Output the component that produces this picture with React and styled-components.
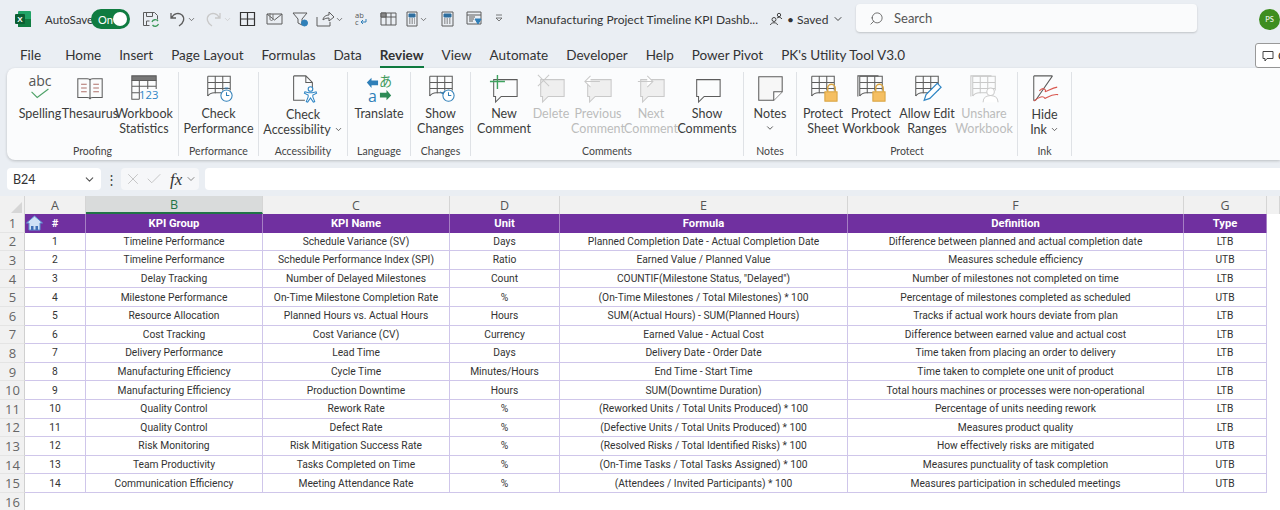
import styled, { createGlobalStyle } from 'styled-components';
import { ChevronDown, Search, X, Check } from 'lucide-react';

const GlobalStyle = createGlobalStyle`
  html, body { margin: 0; padding: 0; background: #fff; }
  body { font-family: Lato, 'Open Sans', 'Liberation Sans', sans-serif; }
`;

const GRAY = '#5c5c5c';
const FAINT = '#c9c9c9';

// ---- ribbon icons ----
const Ico = ({ children, size = 30 }) => (
  <svg width={size} height={size} viewBox="0 0 32 32" fill="none" strokeWidth="1.1" style={{ overflow: 'visible' }}>{children}</svg>
);

const GridLines = ({ c = GRAY, x = 0 }) => (
  <g stroke={c} transform={`translate(${x} 0)`}>
    <path d="M4 2.500h24v15M4 2.500v21M4 9h24M4 15.500h24M12 2.500v18M20 2.500v15" />
    <path d="M4 23.500c2-3 4-3.500 7-3.500h8" />
  </g>
);

const Clock = ({ c = '#2f7fb8', cx = 24, cy = 23 }) => (
  <g stroke={c} fill="#fff">
    <circle cx={cx} cy={cy} r="6" />
    <path d={`M${cx} ${cy - 3.5}v3.500h3`} fill="none" />
    <path d={`M${cx - 2} ${cy - 8}h4`} />
  </g>
);

const Lock = ({ x = 0 }) => (
  <g transform={`translate(${x} 0)`}>
    <path d="M21 19v-4a4 4 0 0 1 8 0v4" stroke="#d9a441" strokeWidth="1.6" fill="none" />
    <rect x="18" y="19" width="13" height="10" fill="#f5bf62" stroke="#d9a441" />
  </g>
);

const Bubble = ({ c = GRAY, fill = 'none' }) => (
  <path d="M5 6h25v18H13l-6 6v-6H5z" stroke={c} fill={fill} />
);

const icons = {
  spelling: (
    <Ico>
      <text x="16" y="13" textAnchor="middle" fontSize="15" fill="#555" fontFamily="Open Sans, sans-serif">abc</text>
      <path d="M7 19l6 6 12-9" stroke="#4da167" strokeWidth="1.2" />
    </Ico>
  ),
  thesaurus: (
    <Ico>
      <path d="M3 5h10c2 0 3 1 3 2 0-1 1-2 3-2h10v20H19c-2 0-3 1-3 2 0-1-1-2-3-2H3zM16 7v20" stroke={GRAY} />
      <path d="M6.500 11h6M6.500 15h6M6.500 19h6M19.500 11h6M19.500 15h6M19.500 19h6" stroke="#b0706a" />
    </Ico>
  ),
  stats: (
    <Ico>
      <path d="M3 2h26v5H3z" fill="#777" stroke={GRAY} />
      <path d="M3 7v20h8M29 7v9M3 13h26M3 20h8M11 7v20M20 7v9" stroke={GRAY} />
      <text x="21" y="27" textAnchor="middle" fontSize="12" fill="#2f86c5" fontFamily="Open Sans, sans-serif">123</text>
    </Ico>
  ),
  performance: <Ico><GridLines /><Clock /></Ico>,
  accessibility: (
    <Ico>
      <path d="M6 2h13l7 7v9M19 2v7h7M6 2v26h12" stroke={GRAY} />
      <g stroke="#2f86c5" fill="#fff">
        <circle cx="24" cy="16" r="2.500" />
        <path d="M18 19l4 1h4l4-1 .5 1.500-4 2v2l2 5-1.500.5-3-4.500-3 4.500-1.500-.5 2-5v-2l-4-2z" />
      </g>
    </Ico>
  ),
  translate: (
    <Ico>
      <path d="M3 9l5-5v3h7v5H8v3z" fill="#2f7fb8" />
      <text x="9" y="30" textAnchor="middle" fontSize="17" fill="#2f7fb8" fontFamily="Open Sans, sans-serif">a</text>
      <text x="23" y="13" textAnchor="middle" fontSize="14" fill="#3f9a5c" fontFamily="Noto Sans CJK JP, sans-serif">あ</text>
      <path d="M29 23l-5 5v-3h-7v-5h7v-3z" fill="#2e8b57" />
    </Ico>
  ),
  changes: (
    <Ico>
      <GridLines />
      <circle cx="24" cy="23" r="6" stroke="#2f7fb8" fill="#fff" />
      <path d="M24 19.500V23h3M15 19l3 2 2-3" stroke="#2f7fb8" />
    </Ico>
  ),
  newComment: (
    <Ico>
      <Bubble />
      <path d="M9 1v15M1 8h16" stroke="#3fa35f" strokeWidth="1.500" />
    </Ico>
  ),
  deleteComment: (
    <Ico>
      <Bubble c={FAINT} fill="#efefef" />
      <path d="M2 1l12 12M14 1L2 13" stroke={FAINT} />
    </Ico>
  ),
  prevComment: (
    <Ico>
      <Bubble c={FAINT} fill="#efefef" />
      <path d="M2 8h16M8 2L2 8l6 6" stroke={FAINT} fill="#fff" />
    </Ico>
  ),
  nextComment: (
    <Ico>
      <Bubble c={FAINT} fill="#efefef" />
      <path d="M2 8h16M12 2l6 6-6 6" stroke={FAINT} fill="#fff" />
    </Ico>
  ),
  showComments: <Ico><Bubble /></Ico>,
  notes: (
    <Ico>
      <path d="M4 3h25v16l-9 9H4z" stroke={GRAY} fill="#f7f7f7" />
      <path d="M29 19h-9v9" stroke={GRAY} fill="#fff" />
    </Ico>
  ),
  protectSheet: <Ico><GridLines /><Lock /></Ico>,
  protectWorkbook: (
    <Ico>
      <path d="M2 24V2h22" stroke={GRAY} />
      <GridLines />
      <Lock />
    </Ico>
  ),
  allowEdit: (
    <Ico>
      <GridLines />
      <path d="M27 10l4 4-12 12-6 2 2-6z" stroke="#2f86c5" fill="#fff" strokeWidth="1.3" />
    </Ico>
  ),
  unshare: (
    <Ico>
      <path d="M2 24V2h22" stroke={FAINT} />
      <GridLines c={FAINT} />
      <circle cx="23" cy="19" r="4" stroke={FAINT} fill="#fff" />
      <path d="M15 30c0-5 4-7 8-7s8 2 8 7" stroke={FAINT} fill="#fff" />
    </Ico>
  ),
  ink: (
    <Ico>
      <path d="M4 2h20M4 2v26h2L24 2" stroke={GRAY} />
      <path d="M10 18c4-5 8-1 6 1 3-1 8-4 13-5M4 29c6-5 10-6 12-3 4-2 8-5 14-4" stroke="#d9574f" strokeWidth="1.200" />
    </Ico>
  ),
};

// ---- quick access icons ----
const Qat = ({ w = 16, children }) => (
  <QatSlot $w={w}>
    <svg width={w} height="18" viewBox={`0 0 ${w} 18`} fill="none" stroke={GRAY} strokeWidth="1" style={{ overflow: 'visible' }}>{children}</svg>
  </QatSlot>
);

const Caret = ({ faint }) => <QatCaret size={9} color={faint ? FAINT : '#555'} />;

const ExcelLogo = () => (
  <LogoBox>
    <svg width="16" height="16" viewBox="0 0 16 16">
      <rect x="3" y="0" width="13" height="16" rx="1" fill="#21a366" />
      <rect x="3" y="8" width="13" height="8" fill="#107c41" />
      <rect x="0" y="3" width="10" height="10" rx="1" fill="#0b5e32" />
      <text x="5" y="11" textAnchor="middle" fontSize="8" fontWeight="700" fill="#fff" fontFamily="Liberation Sans, sans-serif">X</text>
    </svg>
  </LogoBox>
);

// ---- data ----
const tabs = ['Home', 'Insert', 'Page Layout', 'Formulas', 'Data', 'Review', 'View', 'Automate', 'Developer', 'Help', 'Power Pivot', "PK's Utility Tool V3.0"];

const groups = [
  { name: 'Proofing', width: 172, pad: 8, items: [
    { icon: 'spelling', w: 50, lines: ['Spelling'] },
    { icon: 'thesaurus', w: 50, lines: ['Thesaurus'] },
    { icon: 'stats', w: 58, lines: ['Workbook', 'Statistics'] },
  ] },
  { name: 'Performance', width: 80, items: [{ icon: 'performance', w: 79, lines: ['Check', 'Performance'] }] },
  { name: 'Accessibility', width: 89, items: [{ icon: 'accessibility', w: 88, lines: ['Check', 'Accessibility'], caret: 'inline', drop: 1 }] },
  { name: 'Language', width: 63, items: [{ icon: 'translate', w: 62, lines: ['Translate'] }] },
  { name: 'Changes', width: 60, items: [{ icon: 'changes', w: 59, lines: ['Show', 'Changes'] }] },
  { name: 'Comments', width: 273, pad: 8, items: [
    { icon: 'newComment', w: 50, lines: ['New', 'Comment'] },
    { icon: 'deleteComment', w: 44, lines: ['Delete'], off: true },
    { icon: 'prevComment', w: 50, lines: ['Previous', 'Comment'], off: true },
    { icon: 'nextComment', w: 56, lines: ['Next', 'Comment'], off: true },
    { icon: 'showComments', w: 56, lines: ['Show', 'Comments'] },
  ] },
  { name: 'Notes', width: 53, items: [{ icon: 'notes', w: 52, lines: ['Notes'], caret: 'below' }] },
  { name: 'Protect', width: 221, pad: 4, items: [
    { icon: 'protectSheet', w: 44, lines: ['Protect', 'Sheet'] },
    { icon: 'protectWorkbook', w: 52, lines: ['Protect', 'Workbook'] },
    { icon: 'allowEdit', w: 60, lines: ['Allow Edit', 'Ranges'] },
    { icon: 'unshare', w: 54, lines: ['Unshare', 'Workbook'], off: true },
  ] },
  { name: 'Ink', width: 54, items: [{ icon: 'ink', w: 53, lines: ['Hide', 'Ink'], caret: 'inline', drop: 1 }] },
];

const columns = [
  { letter: 'A', w: 61 },
  { letter: 'B', w: 177, active: true },
  { letter: 'C', w: 187 },
  { letter: 'D', w: 110 },
  { letter: 'E', w: 288 },
  { letter: 'F', w: 336 },
  { letter: 'G', w: 83 },
];

const headers = ['#', 'KPI Group', 'KPI Name', 'Unit', 'Formula', 'Definition', 'Type'];

const rows = [
  ['1', 'Timeline Performance', 'Schedule Variance (SV)', 'Days', 'Planned Completion Date - Actual Completion Date', 'Difference between planned and actual completion date', 'LTB'],
  ['2', 'Timeline Performance', 'Schedule Performance Index (SPI)', 'Ratio', 'Earned Value / Planned Value', 'Measures schedule efficiency', 'UTB'],
  ['3', 'Delay Tracking', 'Number of Delayed Milestones', 'Count', 'COUNTIF(Milestone Status, "Delayed")', 'Number of milestones not completed on time', 'LTB'],
  ['4', 'Milestone Performance', 'On-Time Milestone Completion Rate', '%', '(On-Time Milestones / Total Milestones) * 100', 'Percentage of milestones completed as scheduled', 'UTB'],
  ['5', 'Resource Allocation', 'Planned Hours vs. Actual Hours', 'Hours', 'SUM(Actual Hours) - SUM(Planned Hours)', 'Tracks if actual work hours deviate from plan', 'LTB'],
  ['6', 'Cost Tracking', 'Cost Variance (CV)', 'Currency', 'Earned Value - Actual Cost', 'Difference between earned value and actual cost', 'LTB'],
  ['7', 'Delivery Performance', 'Lead Time', 'Days', 'Delivery Date - Order Date', 'Time taken from placing an order to delivery', 'LTB'],
  ['8', 'Manufacturing Efficiency', 'Cycle Time', 'Minutes/Hours', 'End Time - Start Time', 'Time taken to complete one unit of product', 'LTB'],
  ['9', 'Manufacturing Efficiency', 'Production Downtime', 'Hours', 'SUM(Downtime Duration)', 'Total hours machines or processes were non-operational', 'LTB'],
  ['10', 'Quality Control', 'Rework Rate', '%', '(Reworked Units / Total Units Produced) * 100', 'Percentage of units needing rework', 'LTB'],
  ['11', 'Quality Control', 'Defect Rate', '%', '(Defective Units / Total Units Produced) * 100', 'Measures product quality', 'LTB'],
  ['12', 'Risk Monitoring', 'Risk Mitigation Success Rate', '%', '(Resolved Risks / Total Identified Risks) * 100', 'How effectively risks are mitigated', 'UTB'],
  ['13', 'Team Productivity', 'Tasks Completed on Time', '%', '(On-Time Tasks / Total Tasks Assigned) * 100', 'Measures punctuality of task completion', 'UTB'],
  ['14', 'Communication Efficiency', 'Meeting Attendance Rate', '%', '(Attendees / Invited Participants) * 100', 'Measures participation in scheduled meetings', 'UTB'],
];

const RibbonButton = ({ icon, w, lines, off, caret, drop }) => (
  <ButtonWrap $w={w} $off={off}>
    <IconBox>{icons[icon]}</IconBox>
    <ButtonLabel $drop={drop}>
      {lines.map((line, i) => (
        <div key={line}>
          {line}
          {caret === 'inline' && i === lines.length - 1 && <ChevronDown size={9} style={{ marginLeft: 3 }} />}
        </div>
      ))}
      {caret === 'below' && <ChevronDown size={10} />}
    </ButtonLabel>
  </ButtonWrap>
);

export default function App() {
  return (
    <Page>
      <GlobalStyle />
      <TitleBar>
        <ExcelLogo />
        <AutoSave>AutoSave</AutoSave>
        <Toggle>On<Knob /></Toggle>
        <QatRow>
          <Qat w={17}>
            <path d="M1.500 2.500h11l3 3v4M1.500 2.500v13h6M4.500 2.500v4h6v-4M4.500 15v-4h3" />
            <path d="M10 12a3.500 3.500 0 0 1 6-1M16.500 14a3.500 3.500 0 0 1-6 1" stroke="#3f9a5c" strokeWidth="1.300" />
          </Qat>
          <Spacer $w={10} />
          <Qat w={17}><path d="M2 3v5h5M2.500 8C5 3 10 2.500 13 5c3 3 2 8-3 11" strokeWidth="1.300" /></Qat>
          <Caret />
          <Spacer $w={9} />
          <Qat w={17}><path d="M15 3v5h-5M14.500 8C12 3 7 2.500 4 5c-3 3-2 8 3 11" stroke={FAINT} strokeWidth="1.300" /></Qat>
          <Caret faint />
          <Spacer $w={8} />
          <Qat w={15}><path d="M.5 2.500h14v13H.5zM7.500 2.500v13M.5 9h14" stroke="#333" strokeWidth="1.200" /></Qat>
          <Spacer $w={11} />
          <Qat w={17}><path d="M1 4h15v10H1zM1 4l7.500 6L16 4" /><path d="M4 3v6c0 2 3 2 3 0V4" stroke="#777" /></Qat>
          <Spacer $w={9} />
          <Qat w={17}>
            <path d="M1 3h14l-5 6v6l-4-2V9z" />
            <circle cx="12.500" cy="13" r="3" fill="#2f7fb8" stroke="#2f7fb8" />
          </Qat>
          <Spacer $w={7} />
          <Qat w={18}><path d="M1 7v9h13v-4M7 10c0-3 3-5 6-5V2l5 5-5 4V8c-3 0-5 1-6 2z" /></Qat>
          <Caret />
          <Spacer $w={11} />
          <Qat w={12}>
            <text x="0" y="8" fontSize="7.500" fill="#555" stroke="none" fontFamily="Open Sans, sans-serif">ab</text>
            <text x="0" y="15" fontSize="7.500" fill="#555" stroke="none" fontFamily="Open Sans, sans-serif">c</text>
            <path d="M11 9v3H6l2-2M6 12l2 2" stroke="#2f7fb8" />
          </Qat>
          <Spacer $w={13} />
          <Qat w={17}><path d="M1 3h15v12H1zM1 7h15M6 3v12M11 3v12" /><path d="M1 3h5v4H1z" fill="#888" /></Qat>
          <Spacer $w={9} />
          <Qat w={12}><path d="M1 2h10v14H1z" /><path d="M3 4h6v3H3z" fill="#2f6f9f" stroke="#2f6f9f" /><path d="M3 9h6M3 11h6M3 13h6" strokeDasharray="1.500 1" /></Qat>
          <Caret />
          <Spacer $w={13} />
          <Qat w={13}><path d="M1 2h11v14H1z" /><path d="M3 4h7v3H3z" fill="#2f6f9f" stroke="#2f6f9f" /><path d="M3 9h7M3 11h7M3 13h7" strokeDasharray="1.500 1" /></Qat>
          <Spacer $w={12} />
          <Qat w={16}><path d="M1 2h14v12H1zM1 5h14M3 7h6M3 9h5M3 11h4" /><path d="M9 9h6l-3 5z" fill="#2f7fb8" stroke="#2f7fb8" /></Qat>
          <Spacer $w={13} />
          <Qat w={8}><path d="M1 5h6M1 8h6l-3 3z" strokeWidth="0.800" /></Qat>
        </QatRow>
        <DocTitle>Manufacturing Project Timeline KPI Dashb...</DocTitle>
        <Saved>
          <svg width="14" height="14" viewBox="0 0 14 14" fill="none" stroke="#444" strokeWidth="1">
            <circle cx="5" cy="7.500" r="2" /><path d="M1.500 13c0-3 7-3 7 0" /><circle cx="10" cy="3" r="1.700" /><path d="M8 6c1-1 4-1 5 1" />
          </svg>
          <SavedText>• Saved</SavedText>
          <ChevronDown size={12} color="#444" />
        </Saved>
        <SearchBox>
          <Search size={15} color="#555" strokeWidth={1.3} style={{ transform: 'scaleX(-1)' }} />
          <span>Search</span>
        </SearchBox>
        <Avatar>PS</Avatar>
      </TitleBar>

      <TabRow>
        <Tab $first>File</Tab>
        {tabs.map((t) => (
          <Tab key={t} $active={t === 'Review'}>{t}</Tab>
        ))}
        <CommentsButton>
          <svg width="12" height="12" viewBox="0 0 12 12" fill="none" stroke="#444"><path d="M1 1.500h10v7H5l-2 2.500V8.500H1z" /></svg>
          Comments
        </CommentsButton>
      </TabRow>

      <Ribbon>
        {groups.map((g, i) => (
          <Group key={g.name} $w={g.width} $last={i === groups.length - 1}>
            <GroupButtons $pad={g.pad}>
              {g.items.map((it) => <RibbonButton key={it.icon} {...it} />)}
            </GroupButtons>
            <GroupName>{g.name}</GroupName>
          </Group>
        ))}
      </Ribbon>

      <FormulaBar>
        <NameBox>B24<ChevronDown size={13} color="#555" /></NameBox>
        <Dots>⋮</Dots>
        <FxBox>
          <X size={18} color="#b5b5b5" strokeWidth={1} />
          <Check size={18} color="#b5b5b5" strokeWidth={1} />
          <Fx>fx</Fx>
          <ChevronDown size={12} color="#888" />
        </FxBox>
        <FormulaInput />
      </FormulaBar>

      <Sheet>
        <Corner><CornerMark /></Corner>
        {columns.map((c) => (
          <ColHead key={c.letter} $active={c.active}>{c.letter}</ColHead>
        ))}
        <ColHead />

        <RowHead>1</RowHead>
        {headers.map((h, i) => (
          <HeadCell key={h}>
            {i === 0 && (
              <HomeIcon width="17" height="16" viewBox="0 0 17 16">
                <path d="M8.500 1L.5 8h2.500v7h11V8h2.500z" fill="#cfe0f5" stroke="#5b8fd0" />
                <path d="M5 15v-4h2.500v4M9.500 15v-4H12v4" fill="#3f6fb5" />
              </HomeIcon>
            )}
            {h}
          </HeadCell>
        ))}
        <Blank />

        {rows.map((r, i) => [
          <RowHead key={`h${i}`}>{i + 2}</RowHead>,
          ...r.map((v, j) => <Cell key={`${i}-${j}`}>{v}</Cell>),
          <Blank key={`b${i}`} />,
        ])}

        <RowHead>16</RowHead>
      </Sheet>
    </Page>
  );
}

const Page = styled.div`
  width: 1280px;
  height: 510px;
  overflow: hidden;
  background: #eaeef3;
  display: flex;
  flex-direction: column;
`;

const TitleBar = styled.div`
  height: 38px;
  display: flex;
  align-items: center;
  padding-left: 15px;
  flex-shrink: 0;
`;

const LogoBox = styled.div`
  width: 16px;
  height: 16px;
  display: flex;
`;

const AutoSave = styled.div`
  margin-left: 14px;
  font-size: 11.500px;
  color: #333;
  width: 46px;
`;

const Toggle = styled.div`
  width: 40px;
  height: 20px;
  border-radius: 10px;
  background: #107c41;
  color: #fff;
  font-size: 11px;
  display: flex;
  align-items: center;
  justify-content: space-between;
  padding: 0 3px 0 7px;
  box-sizing: border-box;
`;

const Knob = styled.div`
  width: 14px;
  height: 14px;
  border-radius: 50%;
  background: #fff;
`;

const QatRow = styled.div`
  display: flex;
  align-items: center;
  margin-left: 12px;
  width: 384px;
  flex-shrink: 0;
`;

const QatSlot = styled.div`
  width: ${({ $w }) => $w}px;
  height: 18px;
  flex-shrink: 0;
  display: flex;
`;

const QatCaret = styled(ChevronDown)`
  margin-left: 1px;
  flex-shrink: 0;
`;

const Spacer = styled.div`
  width: ${({ $w }) => $w}px;
  flex-shrink: 0;
`;

const DocTitle = styled.div`
  font-size: 12px;
  color: #333;
  width: 243px;
  white-space: nowrap;
  flex-shrink: 0;
`;

const Saved = styled.div`
  display: flex;
  align-items: center;
  width: 87px;
  flex-shrink: 0;
  gap: 4px;
`;

const SavedText = styled.span`
  font-size: 12px;
  color: #333;
`;

const SearchBox = styled.div`
  width: 341px;
  height: 28px;
  box-sizing: border-box;
  background: #fafbfc;
  border-radius: 4px;
  box-shadow: 0 1px 2px rgba(0, 0, 0, 0.18);
  display: flex;
  align-items: center;
  gap: 10px;
  padding-left: 13px;
  font-size: 13px;
  color: #555;
  flex-shrink: 0;
  margin-top: -2px;
`;

const Avatar = styled.div`
  width: 21px;
  height: 21px;
  border-radius: 50%;
  background: #3e8e1f;
  color: #fff;
  font-size: 7.500px;
  display: flex;
  align-items: center;
  justify-content: center;
  margin-left: 62px;
  flex-shrink: 0;
`;

const TabRow = styled.div`
  height: 30px;
  display: flex;
  align-items: stretch;
  padding-left: 20px;
  gap: 18px;
  flex-shrink: 0;
`;

const Tab = styled.div`
  font-size: 13.500px;
  color: #333;
  font-weight: ${({ $active }) => ($active ? 700 : 400)};
  line-height: 34px;
  white-space: nowrap;
  margin-right: ${({ $first }) => ($first ? 6 : 0)}px;
  box-shadow: ${({ $active }) => ($active ? 'inset 0 -2px 0 #107c41' : 'none')};
`;

const CommentsButton = styled.div`
  display: flex;
  align-items: center;
  gap: 4px;
  height: 23px;
  margin-top: 5px;
  margin-left: auto;
  margin-right: -62px;
  padding: 0 6px;
  background: #fff;
  border: 1px solid #999;
  border-radius: 3px;
  font-size: 12px;
  color: #333;
`;

const Ribbon = styled.div`
  height: 92px;
  margin-left: 7px;
  background: #fbfcfd;
  border-radius: 8px 0 0 8px;
  box-shadow: 0 1px 3px rgba(0, 0, 0, 0.2);
  display: flex;
  padding: 4px 0;
  box-sizing: border-box;
  flex-shrink: 0;
`;

const Group = styled.div`
  width: ${({ $w }) => $w}px;
  display: flex;
  flex-direction: column;
  box-sizing: border-box;
  border-right: 1px solid #dfe2e6;
  flex-shrink: 0;
`;

const GroupButtons = styled.div`
  height: 72px;
  flex-shrink: 0;
  display: flex;
  padding-left: ${({ $pad }) => $pad || 0}px;
`;

const GroupName = styled.div`
  height: 12px;
  line-height: 14px;
  font-size: 10.500px;
  color: #444;
  text-align: center;
`;

const ButtonWrap = styled.div`
  width: ${({ $w }) => $w}px;
  display: flex;
  flex-direction: column;
  align-items: center;
  padding-top: 2px;
  color: ${({ $off }) => ($off ? '#bcbcbc' : '#3c3c3c')};
  flex-shrink: 0;
`;

const IconBox = styled.div`
  height: 30px;
  display: flex;
`;

const ButtonLabel = styled.div`
  margin-top: ${({ $drop }) => ($drop ? 3 : 2)}px;
  font-size: 12.500px;
  line-height: 15px;
  text-align: center;
  white-space: nowrap;
`;

const FormulaBar = styled.div`
  height: 36px;
  padding: 8px 0 6px 7px;
  box-sizing: border-box;
  display: flex;
  align-items: stretch;
  flex-shrink: 0;
`;

const NameBox = styled.div`
  width: 94px;
  box-sizing: border-box;
  background: #fff;
  border-radius: 4px;
  display: flex;
  align-items: center;
  justify-content: space-between;
  padding: 0 5px 0 6px;
  font-size: 12.500px;
  color: #333;
`;

const Dots = styled.div`
  width: 20px;
  text-align: center;
  font-size: 13px;
  line-height: 22px;
  color: #444;
`;

const FxBox = styled.div`
  width: 78px;
  box-sizing: border-box;
  background: #f6f7f9;
  border-radius: 4px;
  display: flex;
  align-items: center;
  gap: 3px;
  padding: 0 0 0 3px;
`;

const Fx = styled.span`
  font-family: 'Liberation Serif', serif;
  font-style: italic;
  font-size: 17px;
  color: #333;
  line-height: 1;
  margin-left: 4px;
`;

const FormulaInput = styled.div`
  flex: 1;
  margin-left: 6px;
  background: #fff;
  border-radius: 4px 0 0 4px;
`;

const Sheet = styled.div`
  flex: 1;
  background: #fff;
  display: grid;
  grid-template-columns: 25px ${columns.map((c) => `${c.w}px`).join(' ')} 13px;
  grid-template-rows: 18px repeat(15, 18.6px) 1fr;
  font-family: Roboto, 'Liberation Sans', sans-serif;
`;

const Corner = styled.div`
  background: #f1f1f1;
  border-right: 1px solid #d5d5d5;
  position: relative;
`;

const CornerMark = styled.div`
  position: absolute;
  right: 2px;
  bottom: 1px;
  width: 0;
  height: 0;
  border-left: 11px solid transparent;
  border-bottom: 11px solid #d6d6d6;
`;

const ColHead = styled.div`
  background: ${({ $active }) => ($active ? '#d9dbdb' : '#f1f1f1')};
  border-right: 1px solid #d5d5d5;
  border-bottom: ${({ $active }) => ($active ? '2px solid #217346' : 'none')};
  box-sizing: border-box;
  color: ${({ $active }) => ($active ? '#217346' : '#555')};
  font-size: 12.500px;
  font-family: 'Open Sans', sans-serif;
  display: flex;
  align-items: center;
  justify-content: center;
`;

const RowHead = styled.div`
  background: #f1f1f1;
  border-right: 1px solid #d0d0d0;
  border-bottom: 1px solid #e4e4e4;
  box-sizing: border-box;
  color: #666;
  font-size: 13px;
  font-family: 'Open Sans', sans-serif;
  display: flex;
  align-items: center;
  justify-content: center;
  padding-left: 1px;
  grid-column: 1;
`;

const HeadCell = styled.div`
  background: #7030a0;
  color: #fff;
  font-weight: 700;
  font-size: 11.200px;
  border-right: 1px solid #a67fc4;
  box-sizing: border-box;
  display: flex;
  align-items: center;
  justify-content: center;
  position: relative;
`;

const HomeIcon = styled.svg`
  position: absolute;
  left: 1px;
  top: 1px;
`;

const Cell = styled.div`
  border-right: 1px solid #cfc6ea;
  border-bottom: 1px solid #cfc6ea;
  box-sizing: border-box;
  font-size: 10.250px;
  color: #333;
  display: flex;
  align-items: center;
  justify-content: center;
  white-space: nowrap;
`;

const Blank = styled.div`
  background: #fff;
`;
